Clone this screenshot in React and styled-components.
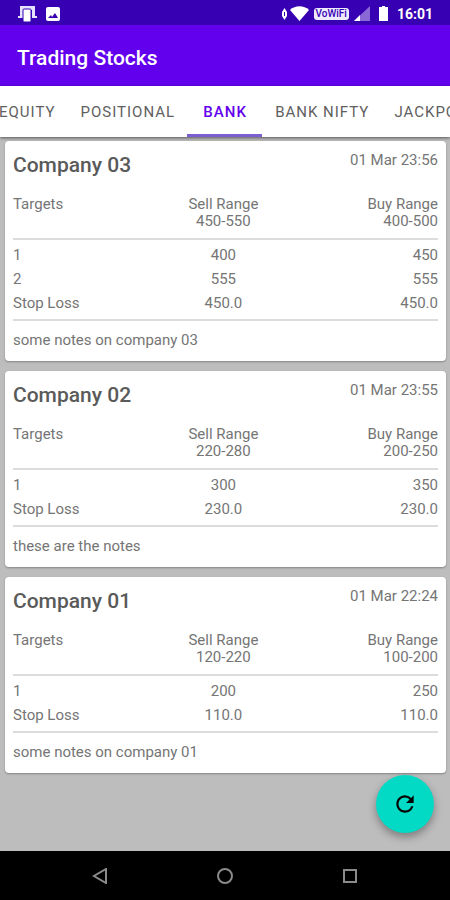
import React, { useLayoutEffect, useRef, useState } from 'react'
import styled, { createGlobalStyle } from 'styled-components'
import { MdRefresh } from 'react-icons/md'

const GlobalStyle = createGlobalStyle`
  * {
    box-sizing: border-box;
  }
  body {
    margin: 0;
    font-family: Roboto, 'Liberation Sans', sans-serif;
    font-size: 15px;
    color: #757575;
  }
  button {
    border: 0;
    padding: 0;
    background: none;
    font: inherit;
    color: inherit;
    cursor: pointer;
  }
`

const Screen = styled.div`
  display: flex;
  flex-direction: column;
  min-height: 100vh;
  background: #bdbdbd;
`

const StatusBar = styled.div`
  display: flex;
  align-items: center;
  justify-content: space-between;
  height: 25px;
  padding: 2px 17px 0 18px;
  background: #3700b3;
  color: #ffffff;
`

const StatusGroup = styled.div`
  display: flex;
  align-items: center;
  gap: ${({ $gap }) => $gap};
`

const VoWifi = styled.span`
  padding: 0 2px;
  border-radius: 3px;
  background: #eeeaff;
  color: #3700b3;
  font-size: 10px;
  font-weight: 500;
  line-height: 12px;
`

const Clock = styled.span`
  font-size: 14px;
  font-weight: 700;
  line-height: 20px;
`

const AppBar = styled.header`
  display: flex;
  align-items: center;
  height: 61px;
  padding: 4px 17px 0;
  background: #6200ee;
`

const AppTitle = styled.h1`
  margin: 0;
  color: #ffffff;
  font-size: 21px;
  font-weight: 500;
  line-height: 28px;
`

const TabStrip = styled.nav`
  display: flex;
  z-index: 1;
  overflow: hidden;
  background: #ffffff;
  box-shadow: 0 1px 3px rgba(0, 0, 0, 0.55);
`

const Tab = styled.button`
  flex: none;
  min-width: 75px;
  height: 51px;
  padding: 3px 12px 0 13px;
  border-bottom: 3px solid ${({ $active }) => ($active ? '#7b5fd0' : 'transparent')};
  color: ${({ $active }) => ($active ? '#6200ee' : '#606060')};
  font-size: 15px;
  font-weight: ${({ $active }) => ($active ? 500 : 400)};
  letter-spacing: 1px;
  text-transform: uppercase;
  white-space: nowrap;
`

const Content = styled.main`
  position: relative;
  display: flex;
  flex: 1;
  flex-direction: column;
  gap: 10px;
  padding: 4px 4px 77px 5px;
`

const Card = styled.article`
  padding: 8px 8px 12px;
  border-radius: 4px;
  background: #ffffff;
  box-shadow: 0 1px 2px rgba(0, 0, 0, 0.3);
`

const CardHead = styled.div`
  display: flex;
  align-items: flex-start;
  justify-content: space-between;
  margin-bottom: 15px;
`

const Company = styled.h2`
  margin: 0;
  color: #5a5a5a;
  font-size: 21px;
  font-weight: 500;
  line-height: 32px;
`

const Date = styled.time`
  line-height: 22px;
`

const Table = styled.table`
  width: 100%;
  table-layout: fixed;
  border-collapse: separate;
  border-spacing: 0;
`

const HeadCell = styled.th`
  width: ${({ $width }) => $width};
  padding: 0 0 8px;
  border-bottom: 2px solid #dcdcdc;
  font-weight: 400;
  line-height: 17px;
  text-align: ${({ $align }) => $align};
  vertical-align: top;
`

const Cell = styled.td`
  padding: 0;
  font-weight: 400;
  line-height: 24px;
  text-align: ${({ $align }) => $align};

  tr:first-child > & {
    padding-top: 3px;
  }
  tr:last-child > & {
    padding-bottom: 4px;
    border-bottom: 2px solid #dcdcdc;
  }
`

const Notes = styled.p`
  margin: 10px 0 0;
  line-height: 18px;
`

const Fab = styled.button`
  position: absolute;
  right: 16px;
  bottom: 18px;
  display: flex;
  align-items: center;
  justify-content: center;
  width: 58px;
  height: 58px;
  border-radius: 50%;
  background: #03dac5;
  color: #000000;
  box-shadow: 0 4px 8px rgba(0, 0, 0, 0.35);
`

const NavBar = styled.footer`
  display: flex;
  align-items: center;
  justify-content: space-between;
  height: 49px;
  padding: 0 88px;
  background: #000000;
`

const NavButton = styled.button`
  display: flex;
  align-items: center;
  justify-content: center;
  width: 24px;
  height: 24px;
  color: #8a8a8a;
`

const tabs = ['Equity', 'Positional', 'Bank', 'Bank Nifty', 'Jackpot']

const stocks = [
  {
    name: 'Company 03',
    date: '01 Mar 23:56',
    sell: '450-550',
    buy: '400-500',
    rows: [
      ['1', '400', '450'],
      ['2', '555', '555'],
      ['Stop Loss', '450.0', '450.0'],
    ],
    notes: 'some notes on company 03',
  },
  {
    name: 'Company 02',
    date: '01 Mar 23:55',
    sell: '220-280',
    buy: '200-250',
    rows: [
      ['1', '300', '350'],
      ['Stop Loss', '230.0', '230.0'],
    ],
    notes: 'these are the notes',
  },
  {
    name: 'Company 01',
    date: '01 Mar 22:24',
    sell: '120-220',
    buy: '100-200',
    rows: [
      ['1', '200', '250'],
      ['Stop Loss', '110.0', '110.0'],
    ],
    notes: 'some notes on company 01',
  },
]

const StatusIcons = () => (
  <StatusBar>
    <StatusGroup $gap="9px">
      <svg width="19" height="18" viewBox="0 0 19 18">
        <path d="M2 1h15v10h2v2h-5V5H6v8H0v-2h2z" fill="#e6e0ff" />
        <rect x="5" y="4" width="8" height="13" rx="1" fill="#fff" stroke="#3700b3" />
      </svg>
      <svg width="14" height="14" viewBox="0 0 14 14">
        <rect width="14" height="14" rx="2" fill="#fff" />
        <path d="M2 11l3-3 1 2 3-4 3 5z" fill="#3700b3" />
      </svg>
    </StatusGroup>
    <StatusGroup $gap="5px">
      <StatusGroup $gap="3px">
        <svg width="5" height="12" viewBox="0 0 5 12">
          <path d="M0 4l2.500-4L5 4v4l-2.500 4L0 8z" fill="#fff" />
          <rect x="2" y="4" width="1" height="4" fill="#3700b3" />
        </svg>
        <svg width="19" height="15" viewBox="0 0 19 15">
          <path d="M0 4C5-1 14-1 19 4L9.500 15z" fill="#fff" />
        </svg>
      </StatusGroup>
      <VoWifi>VoWiFi</VoWifi>
      <StatusGroup $gap="9px">
        <svg width="16" height="15" viewBox="0 0 16 15">
          <path d="M16 0v15H0z" fill="#8a69d6" />
          <path d="M6 9v6H0z" fill="#fff" />
        </svg>
        <svg width="9" height="15" viewBox="0 0 9 15">
          <path d="M3 0h3v1h3v14H0V1h3z" fill="#fff" />
        </svg>
        <Clock>16:01</Clock>
      </StatusGroup>
    </StatusGroup>
  </StatusBar>
)

const StockCard = ({ stock }) => (
  <Card>
    <CardHead>
      <Company>{stock.name}</Company>
      <Date>{stock.date}</Date>
    </CardHead>
    <Table>
      <thead>
        <tr>
          <HeadCell $width="33%" $align="left">Targets</HeadCell>
          <HeadCell $width="33%" $align="center">
            Sell Range
            <br />
            {stock.sell}
          </HeadCell>
          <HeadCell $width="34%" $align="right">
            Buy Range
            <br />
            {stock.buy}
          </HeadCell>
        </tr>
      </thead>
      <tbody>
        {stock.rows.map(([label, sell, buy]) => (
          <tr key={label}>
            <Cell as="th" scope="row" $align="left">{label}</Cell>
            <Cell $align="center">{sell}</Cell>
            <Cell $align="right">{buy}</Cell>
          </tr>
        ))}
      </tbody>
    </Table>
    <Notes>{stock.notes}</Notes>
  </Card>
)

const App = () => {
  const [active, setActive] = useState('Bank')
  const strip = useRef(null)
  const current = useRef(null)

  // keep the selected tab in the middle of the strip
  useLayoutEffect(() => {
    const tab = current.current
    strip.current.scrollLeft = tab.offsetLeft + tab.offsetWidth / 2 - strip.current.offsetWidth / 2
  }, [active])

  return (
    <Screen>
      <GlobalStyle />
      <StatusIcons />
      <AppBar>
        <AppTitle>Trading Stocks</AppTitle>
      </AppBar>
      <TabStrip ref={strip}>
        {tabs.map((tab) => (
          <Tab
            key={tab}
            ref={tab === active ? current : null}
            $active={tab === active}
            onClick={() => setActive(tab)}
          >
            {tab}
          </Tab>
        ))}
      </TabStrip>
      <Content>
        {stocks.map((stock) => (
          <StockCard key={stock.name} stock={stock} />
        ))}
        <Fab aria-label="Refresh">
          <MdRefresh size={26} />
        </Fab>
      </Content>
      <NavBar>
        <NavButton aria-label="Back">
          <svg width="16" height="16" viewBox="0 0 16 16" fill="none" stroke="currentColor" strokeWidth="2">
            <path d="M14 1v14L2 8z" />
          </svg>
        </NavButton>
        <NavButton aria-label="Home">
          <svg width="18" height="18" viewBox="0 0 18 18" fill="none" stroke="currentColor" strokeWidth="2">
            <circle cx="9" cy="9" r="7" />
          </svg>
        </NavButton>
        <NavButton aria-label="Recent apps">
          <svg width="14" height="14" viewBox="0 0 14 14" fill="none" stroke="currentColor" strokeWidth="2">
            <rect x="1" y="1" width="12" height="12" />
          </svg>
        </NavButton>
      </NavBar>
    </Screen>
  )
}

export default App
